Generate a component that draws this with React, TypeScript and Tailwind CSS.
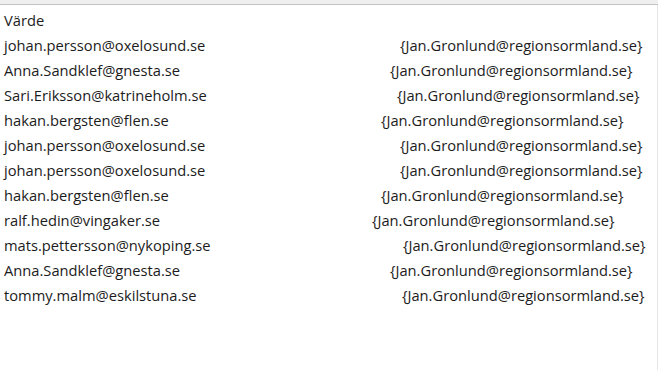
import React from 'react';

const rows = [
  { from: "johan.persson@oxelosund.se", cols: "grid-cols-[396px_1fr]" },
  { from: "Anna.Sandklef@gnesta.se", cols: "grid-cols-[386px_1fr]" },
  { from: "Sari.Eriksson@katrineholm.se", cols: "grid-cols-[393px_1fr]" },
  { from: "hakan.bergsten@flen.se", cols: "grid-cols-[377px_1fr]" },
  { from: "johan.persson@oxelosund.se", cols: "grid-cols-[396px_1fr]" },
  { from: "johan.persson@oxelosund.se", cols: "grid-cols-[396px_1fr]" },
  { from: "hakan.bergsten@flen.se", cols: "grid-cols-[377px_1fr]" },
  { from: "ralf.hedin@vingaker.se", cols: "grid-cols-[368px_1fr]" },
  { from: "mats.pettersson@nykoping.se", cols: "grid-cols-[399px_1fr]" },
  { from: "Anna.Sandklef@gnesta.se", cols: "grid-cols-[386px_1fr]" },
  { from: "tommy.malm@eskilstuna.se", cols: "grid-cols-[398px_1fr]" }
];

const App = () => {
  return (
    <div className="w-[658px] h-[370px] bg-white overflow-hidden font-['Open_Sans',sans-serif] text-[14.7px] text-[#1c1c1c]">
      {/* top frame edge */}
      <div className="h-1 bg-[#efefef]" />
      <div className="h-px bg-[#c2c2c2]" />

      <div className="pt-[3px] pl-1 border-r border-[#e6e6e6] h-full">
        <div className="h-[25px] leading-[25px]">Värde</div>
        {rows.map((row, index) => (
          <div key={index} className={`grid ${row.cols} h-[25px] leading-[25px] whitespace-nowrap`}>
            <span>{row.from}</span>
            <span>{"{Jan.Gronlund@regionsormland.se}"}</span>
          </div>
        ))}
      </div>
    </div>
  );
};

export default App;
